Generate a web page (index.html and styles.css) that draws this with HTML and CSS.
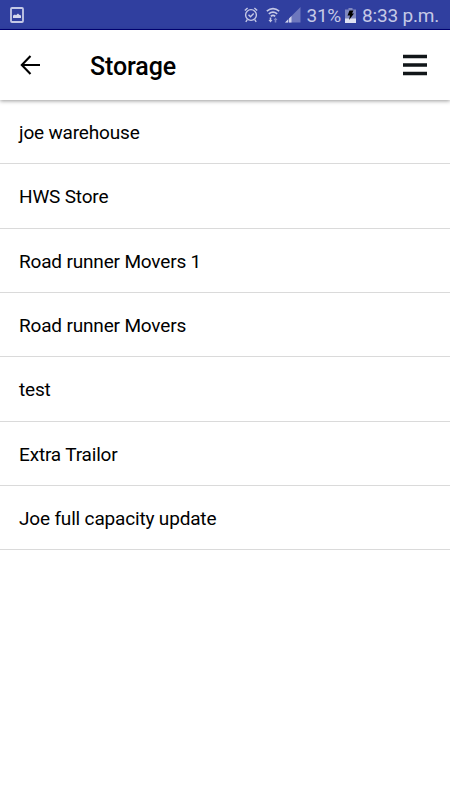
FILE: index.html
```html
<!DOCTYPE html>
<html lang="en">

<head>
    <meta charset="UTF-8">
    <title>Storage</title>
    <link rel="stylesheet" href="styles.css">
</head>

<body>
    <div class="status">
        <svg class="picture" width="14" height="16" viewBox="0 0 14 16">
            <rect x="1" y="1" width="12" height="14" rx="1" fill="none" stroke="#c5c9e6" stroke-width="1.8" />
            <path d="M3 11V8.5l2-1 1 .7L8 6.5l1.2 1.3 1.8.7V11z" fill="#d5d8ee" />
        </svg>
        <svg class="alarm" width="14" height="16" viewBox="0 0 14 16">
            <g fill="none" stroke="#c5c9e6" stroke-width="1.4">
                <circle cx="7" cy="8" r="5.4" />
                <path d="M4.5 7.7l2 2 3.2-3.2M0.8 3.6L3.6 1M13.2 3.6L10.4 1M3.3 12.7L1.8 14.8M10.7 12.7l1.5 2.1" />
            </g>
        </svg>
        <svg class="wifi" width="14" height="16" viewBox="0 0 14 16">
            <g fill="none" stroke="#c5c9e6" stroke-width="1.7">
                <path d="M0.8 4.2q6.2-5 12.4 0M2.8 6.8q4.2-3.4 8.4 0M4.8 9.3q2.2-1.8 4.4 0" />
            </g>
            <path d="M3.7 10.5h1.6V13h1.2l-2 2.5-2-2.5h1.2z" fill="#c5c9e6" />
            <path d="M7.5 13l2-2.5 2 2.5h-1.2v2.5H8.7V13z" fill="#7f88c5" />
        </svg>
        <svg class="signal" width="16" height="16" viewBox="0 0 16 16">
            <path d="M0 15.5L15.5 0v15.5z" fill="#6d77bd" />
            <path d="M0 15.5L3 12.5v3zM4 15.5v-4l2.5-2.5v6.5z" fill="#d0d3eb" />
        </svg>
        <span class="percent">31%</span>
        <svg class="battery" width="11" height="15" viewBox="0 0 11 15">
            <path d="M3.5 0h4v1.5H11V11H0V1.5h3.5z" fill="#8088c0" />
            <path d="M0 10.5h11V15H0z" fill="#e0e2f2" />
            <path d="M4.5 2.5h4L7 5.5h2L4 12l1-4.5H2.5z" fill="#000" />
        </svg>
        <span class="time">8:33 p.m.</span>
    </div>
    <div class="header">
        <svg class="back" width="20" height="20" viewBox="0 0 20 20">
            <path d="M10.5 1L1.8 10l8.7 9M2 10h18" fill="none" stroke="#000" stroke-width="2.1" />
        </svg>
        <h1>Storage</h1>
        <svg class="menu" width="24" height="22" viewBox="0 0 24 22">
            <path d="M0 2.5h24M0 11h24M0 19.5h24" stroke="#111619" stroke-width="3.4" />
        </svg>
    </div>
    <ul class="list">
        <li>joe warehouse</li>
        <li>HWS Store</li>
        <li>Road runner Movers 1</li>
        <li>Road runner Movers</li>
        <li>test</li>
        <li>Extra Trailor</li>
        <li>Joe full capacity update</li>
    </ul>
</body>

</html>
```

FILE: styles.css
```css
body {
    margin: 0;
    background: #fff;
    color: #000;
    font-family: Roboto, sans-serif;
}

svg {
    display: block;
    flex: none;
}

.status {
    display: flex;
    align-items: center;
    box-sizing: border-box;
    height: 30px;
    padding: 1px 11px 0 10px;
    border-bottom: 1px solid #00007b;
    background: #303f9f;
    color: #c5c9e6;
    font-size: 19px;
    letter-spacing: -0.2px;
    white-space: nowrap;
}

.alarm {
    margin-left: auto;
}

.wifi {
    margin-left: 8px;
}

.signal {
    margin-left: 5px;
}

.percent {
    margin-left: 5px;
}

.battery {
    margin-left: 4px;
}

.time {
    margin-left: 6px;
}

.header {
    display: flex;
    align-items: center;
    box-sizing: border-box;
    position: relative;
    height: 70px;
    padding: 0 23px 0 20px;
    box-shadow: 0 1px 4px rgba(0, 0, 0, 0.4);
}

h1 {
    margin: 3px 0 0 50px;
    font-size: 25px;
    font-weight: 500;
    letter-spacing: -0.1px;
}

.menu {
    margin-left: auto;
}

.list {
    margin: 0;
    padding: 0;
    list-style: none;
}

.list li {
    box-sizing: border-box;
    height: 64.35px;
    padding-left: 19px;
    border-bottom: 1px solid #dadada;
    font-size: 19px;
    letter-spacing: -0.17px;
    line-height: 65px;
}
```
